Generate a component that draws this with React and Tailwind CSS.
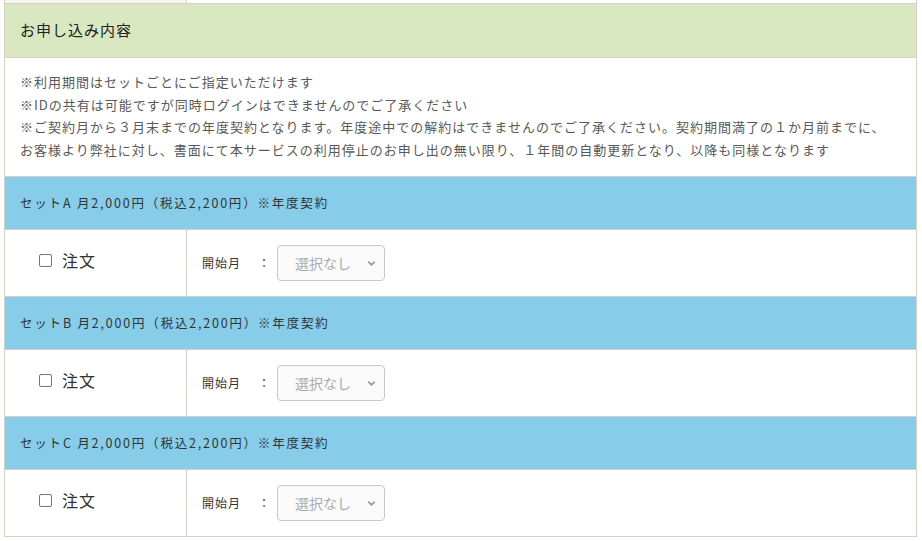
import { ChevronDown } from 'lucide-react'

const font = { fontFamily: '"Noto Sans CJK JP", "Noto Sans", sans-serif' }

const notes = [
  '※利用期間はセットごとにご指定いただけます',
  '※IDの共有は可能ですが同時ログインはできませんのでご了承ください',
  '※ご契約月から３月末までの年度契約となります。年度途中での解約はできませんのでご了承ください。契約期間満了の１か月前までに、',
  'お客様より弊社に対し、書面にて本サービスの利用停止のお申し出の無い限り、１年間の自動更新となり、以降も同様となります',
]

const sets = ['A', 'B', 'C']

function SetBlock({ name }) {
  return (
    <>
      {/* ── Set header ── */}
      <div className="h-[53px] bg-[#87cdea] border-b border-[#d4d0c8] flex items-center pl-[15px] text-[12.5px] text-[#333] tracking-[1.8px]">
        セット{name} 月2,000円（税込2,200円）※年度契約
      </div>

      {/* ── Order row ── */}
      <div className="h-[67px] border-b border-[#d4d0c8] flex">
        <div className="w-[182px] border-r border-[#d4d0c8] flex items-center pl-[34px] pb-[6px] gap-[10px]">
          <span className="w-[13px] h-[13px] border border-[#767676] rounded-[2px] bg-white" />
          <span className="text-[16px] text-[#333] tracking-[1px]">注文</span>
        </div>
        <div className="flex-1 flex items-center pl-[15px]">
          <span className="text-[12px] text-[#333] tracking-[1px]">開始月</span>
          <span className="text-[12px] text-[#333] ml-[17px] mr-[7px]">：</span>
          <div className="w-[108px] h-[36px] border border-[#c8c8c8] rounded-[4px] bg-[#fafafa] flex items-center pl-[17px] pr-[7px]">
            <span className="flex-1 text-[14px] text-[#aaa]">選択なし</span>
            <ChevronDown size={11} strokeWidth={3.5} className="text-[#999]" />
          </div>
        </div>
      </div>
    </>
  )
}

export default function App() {
  return (
    <div className="w-[922px] h-[541px] bg-white overflow-hidden" style={font}>
      <div className="ml-[4px] w-[913px] border-l border-r border-[#d4d0c8]">
        {/* ── Stub of previous row ── */}
        <div className="h-[4px] border-b border-[#d4d0c8] flex">
          <div className="w-[182px] bg-[#f6f4f1] border-r border-[#d4d0c8]" />
        </div>

        {/* ── Section title ── */}
        <div className="h-[54px] bg-[#d9e8c0] border-b border-[#d4d0c8] flex items-center pl-[15px] text-[15px] text-[#222] tracking-[1px]">
          お申し込み内容
        </div>

        {/* ── Notes ── */}
        <div className="h-[119px] border-b border-[#d4d0c8] pl-[15px] pt-[13px] text-[13px] leading-[22.6px] text-[#595959] tracking-[1px]">
          {notes.map((n) => (
            <p key={n} className="whitespace-nowrap">{n}</p>
          ))}
        </div>

        {sets.map((s) => (
          <SetBlock key={s} name={s} />
        ))}
      </div>
    </div>
  )
}
